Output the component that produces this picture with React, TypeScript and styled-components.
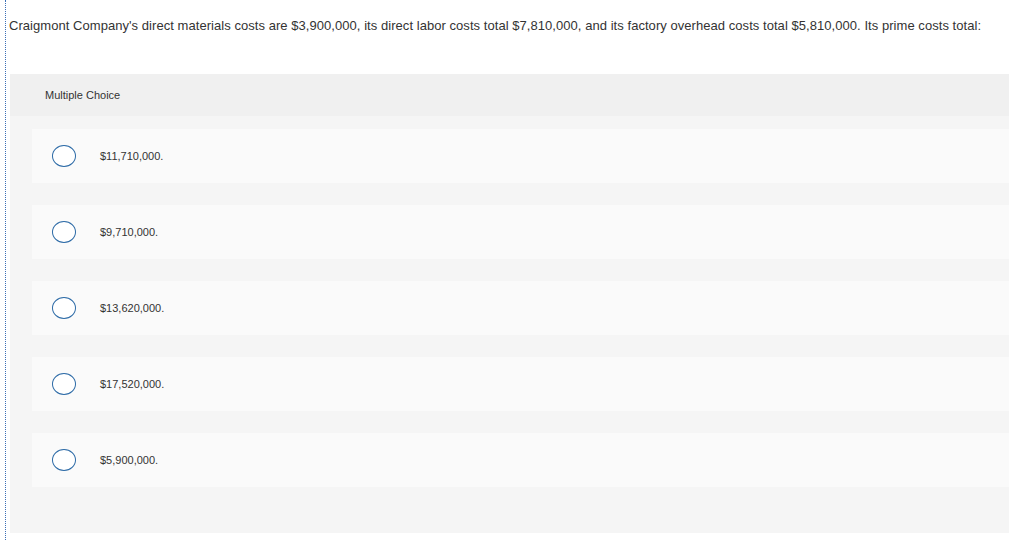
import styled, { createGlobalStyle } from 'styled-components';

const options = ['$11,710,000.', '$9,710,000.', '$13,620,000.', '$17,520,000.', '$5,900,000.'];

const GlobalStyle = createGlobalStyle`
  html, body {
    margin: 0;
    padding: 0;
    background: #ffffff;
  }
  body {
    font-family: 'Liberation Sans', Arial, sans-serif;
    color: #333333;
  }
`;

const App: React.FC = () => {
  return (
    <>
      <GlobalStyle />
      <Frame>
        <Question>
          Craigmont Company's direct materials costs are $3,900,000, its direct labor costs total $7,810,000, and its
          factory overhead costs total $5,810,000. Its prime costs total:
        </Question>

        <Panel>
          <PanelHeader>Multiple Choice</PanelHeader>
          <OptionList>
            {options.map((opt) => (
              <OptionCard key={opt}>
                <Radio />
                <OptionLabel>{opt}</OptionLabel>
              </OptionCard>
            ))}
          </OptionList>
        </Panel>
      </Frame>
    </>
  );
};

export default App;

const Frame = styled.div`
  margin-left: 5px;
  border-left: 1px dotted #3b6fb6;
  width: 1004px;
  height: 540px;
  box-sizing: border-box;
  overflow: hidden;
`;

const Question = styled.p`
  margin: 0;
  padding: 18px 0 0 3px;
  font-size: 13px;
  line-height: 15px;
  letter-spacing: 0.05px;
  color: #333333;
  white-space: nowrap;
`;

const Panel = styled.div`
  margin: 41px 0 0 4px;
  background: #f5f5f5;
`;

const PanelHeader = styled.div`
  height: 42px;
  display: flex;
  align-items: center;
  padding-left: 35px;
  background: #f0f0f0;
  font-size: 11px;
  color: #333333;
`;

const OptionList = styled.div`
  display: flex;
  flex-direction: column;
  gap: 22px;
  padding: 13px 0 46px 22px;
`;

const OptionCard = styled.div`
  height: 54px;
  display: flex;
  align-items: center;
  background: #fafafa;
  padding-left: 20px;
`;

const Radio = styled.span`
  width: 22px;
  height: 20px;
  border: 1.5px solid #2c6aa6;
  border-radius: 50%;
  background: #ffffff;
  flex-shrink: 0;
`;

const OptionLabel = styled.span`
  margin-left: 24px;
  font-size: 11px;
  color: #333333;
`;
